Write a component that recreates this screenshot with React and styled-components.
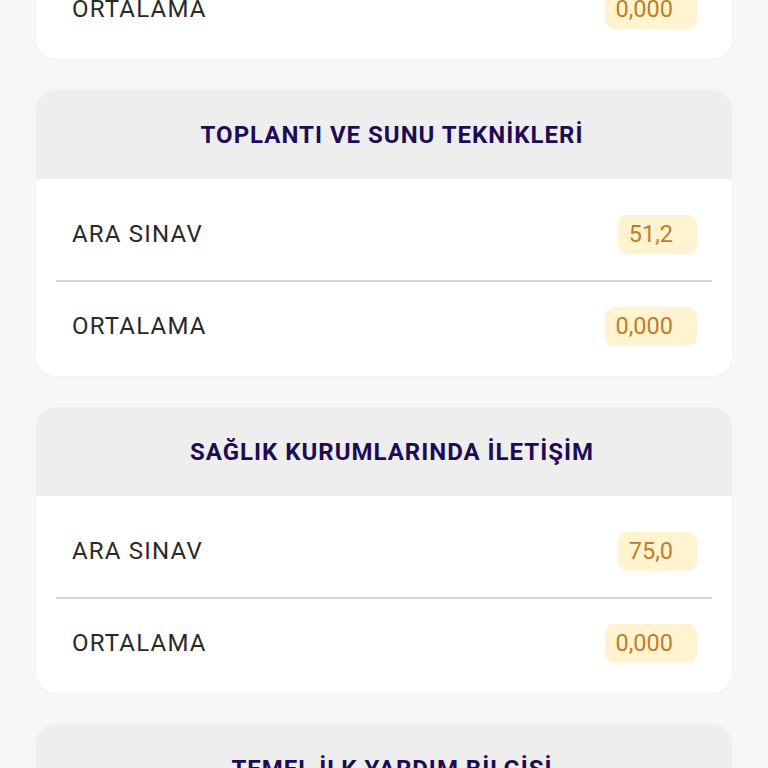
import React from "react";
import styled, { createGlobalStyle } from "styled-components";

const GlobalStyle = createGlobalStyle`
  html, body {
    margin: 0;
    padding: 0;
    background: #f7f7f7;
    font-family: Roboto, "Noto Sans", "Liberation Sans", sans-serif;
    overflow: hidden;
  }
`;

const Page = styled.div`
  width: 768px;
  height: 768px;
  overflow: hidden;
  background: #f7f7f7;
`;

const List = styled.div`
  display: flex;
  flex-direction: column;
  gap: 31px;
  padding: 0 36px;
  margin-top: -227px;
`;

const Card = styled.section`
  background: #ffffff;
  border-radius: 20px;
  overflow: hidden;
  box-shadow: 0 1px 3px rgba(0, 0, 0, 0.03);
`;

const Header = styled.header`
  height: 89px;
  padding-left: 16px;
  background: #eeeeee;
  display: flex;
  align-items: center;
  justify-content: center;
`;

const Title = styled.h2`
  margin: 0;
  font-size: 24px;
  font-weight: 700;
  letter-spacing: 1px;
  color: #1d0c55;
`;

const Body = styled.div`
  padding: 9px 20px 6px;
  display: flex;
  flex-direction: column;
`;

const Row = styled.div`
  height: ${(p) => (p.$first ? "92px" : "88px")};
  display: flex;
  align-items: center;
  justify-content: space-between;
  padding: 0 15px 0 16px;
  border-top: ${(p) => (p.$first ? "none" : "2px solid #d4d4d4")};
`;

const Label = styled.span`
  font-size: 24px;
  letter-spacing: 1.2px;
  color: #2a2a2a;
`;

const Badge = styled.span`
  display: inline-flex;
  align-items: center;
  height: 39px;
  padding: 0 24px 0 11px;
  border-radius: 9px;
  background: #fff3d0;
  color: #bf7e2a;
  font-size: 23.5px;
`;

const courses = [
  { title: "İŞ SAĞLIĞI VE GÜVENLİĞİ", rows: [["ARA SINAV", "60,0"], ["ORTALAMA", "0,000"]] },
  { title: "TOPLANTI VE SUNU TEKNİKLERİ", rows: [["ARA SINAV", "51,2"], ["ORTALAMA", "0,000"]] },
  { title: "SAĞLIK KURUMLARINDA İLETİŞİM", rows: [["ARA SINAV", "75,0"], ["ORTALAMA", "0,000"]] },
  { title: "TEMEL İLK YARDIM BİLGİSİ", rows: [["ARA SINAV", "80,0"], ["ORTALAMA", "0,000"]] },
];

export default function App() {
  return (
    <Page>
      <GlobalStyle />
      <List>
        {courses.map((c) => (
          <Card key={c.title}>
            <Header>
              <Title>{c.title}</Title>
            </Header>
            <Body>
              {c.rows.map(([label, value], i) => (
                <Row key={label} $first={i === 0}>
                  <Label>{label}</Label>
                  <Badge>{value}</Badge>
                </Row>
              ))}
            </Body>
          </Card>
        ))}
      </List>
    </Page>
  );
}
